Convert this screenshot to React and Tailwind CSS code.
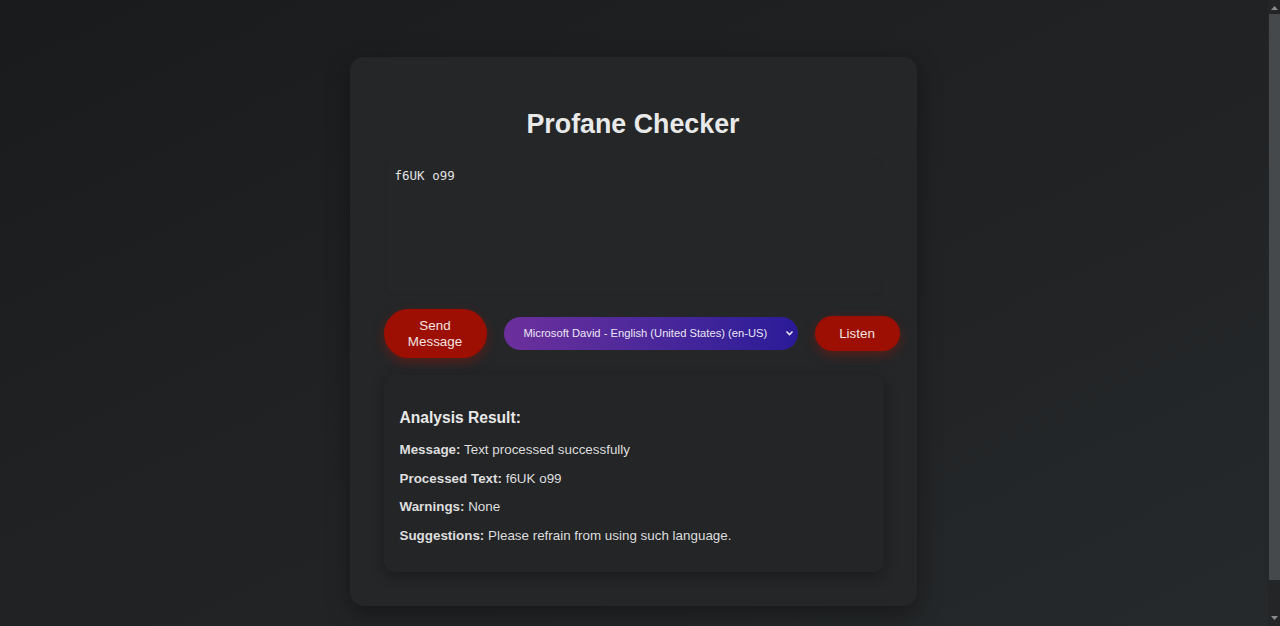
import React, { useState } from "react";

const redButtonClass = `
  shrink-0 rounded-full bg-[#9c0f02] text-[#f1e4e2] text-[13.4px] leading-[16px]
  shadow-[0_4px_12px_rgba(170,20,0,0.4)]
`;

const App = () => {
  const [text, setText] = useState("f6UK o99");

  return (
    <div className="flex h-screen overflow-hidden bg-gradient-to-br from-[#1a1b1d] via-[#202224] to-[#26292b] font-['Liberation_Sans',Arial,sans-serif]">
      {/* Main page */}
      <div className="flex-1 flex justify-center pt-[57px] pr-[2px]">
        <div className="w-[567px] h-[549px] rounded-[14px] bg-[#242628] px-[34px] pt-[34px] shadow-[0_8px_24px_rgba(0,0,0,0.35)]">
          <h1 className="text-center text-[26.8px] font-bold leading-[32px] text-[#e9e9e9] mt-[17px] mb-[16px]">
            Profane Checker
          </h1>

          {/* Text input */}
          <textarea
            value={text}
            onChange={(e) => setText(e.target.value)}
            className="block w-[500px] h-[140px] resize-none rounded-[10px] bg-[#242628] px-[11px] py-[12px] font-['DejaVu_Sans_Mono',monospace] text-[12.5px] leading-[16px] text-[#e2e2e2] outline-none shadow-[inset_0_0_5px_rgba(0,0,0,0.04)]"
          />

          {/* Action row */}
          <div className="mt-[13px] flex items-center gap-[17px]">
            <button className={`${redButtonClass} w-[103px] h-[49px]`}>
              Send
              <br />
              Message
            </button>
            <div className="relative shrink-0 w-[294px] h-[33px] rounded-full bg-gradient-to-r from-[#6c2f9c] to-[#2a1a98]">
              <select className="appearance-none w-full h-full bg-transparent rounded-full pl-[20px] pr-[20px] text-[11.2px] text-[#ebe6f3] outline-none">
                <option className="bg-[#2a1a98]">Microsoft David - English (United States) (en-US)</option>
              </select>
              <svg
                className="pointer-events-none absolute right-[4px] top-[13px]"
                width="9"
                height="7"
                viewBox="0 0 9 7"
                fill="none"
              >
                <path d="M1.5 1.5 L4.5 4.5 L7.5 1.5" stroke="#e8e4f2" strokeWidth="1.6" />
              </svg>
            </div>
            <button className={`${redButtonClass} w-[85px] h-[35px]`}>Listen</button>
          </div>

          {/* Result */}
          <div className="mt-[17px] w-[500px] rounded-[10px] bg-[#232527] px-[16px] pt-[33px] pb-[28px] text-[#dedede] shadow-[0_4px_14px_rgba(0,0,0,0.3)]">
            <h3 className="text-[15.6px] font-bold leading-[20px] text-[#e8e8e8]">Analysis Result:</h3>
            <div className="mt-[14px] space-y-[12.7px] text-[13.4px] leading-[16px]">
              <p>
                <span className="font-bold">Message:</span> Text processed successfully
              </p>
              <p>
                <span className="font-bold">Processed Text:</span> f6UK o99
              </p>
              <p>
                <span className="font-bold">Warnings:</span> None
              </p>
              <p>
                <span className="font-bold">Suggestions:</span> Please refrain from using such language.
              </p>
            </div>
          </div>
        </div>
      </div>

      {/* Window scrollbar */}
      <div className="w-[12px] shrink-0 flex flex-col items-center bg-[#232527]">
        <svg className="mt-[6px]" width="7" height="4" viewBox="0 0 7 4">
          <path d="M0 4 L3.5 0 L7 4 Z" fill="#8a8d90" />
        </svg>
        <div className="mt-[4px] w-[11px] h-[566px] bg-[#46494c]" />
        <svg className="mt-auto mb-[6px]" width="7" height="4" viewBox="0 0 7 4">
          <path d="M0 0 L3.5 4 L7 0 Z" fill="#8a8d90" />
        </svg>
      </div>
    </div>
  );
};

export default App;
